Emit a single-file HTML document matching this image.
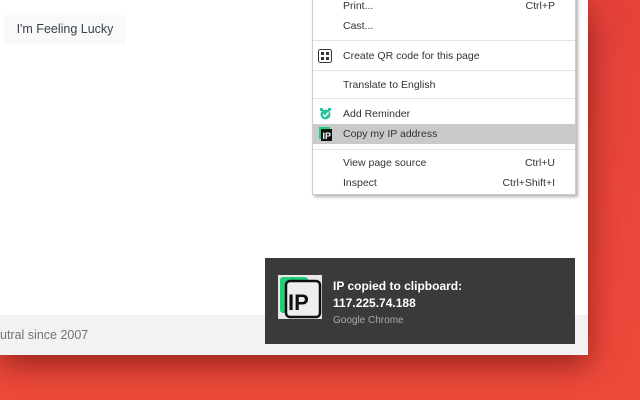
<!DOCTYPE html>
<html><head><style>
*{margin:0;padding:0;box-sizing:border-box}
body{width:640px;height:400px;overflow:hidden;background:linear-gradient(180deg,#e5423a,#ef4a3b);font-family:"Liberation Sans",Arial,sans-serif;position:relative}
.win{position:absolute;left:0;top:0;width:588px;height:355px;background:#fff;box-shadow:0 10px 30px rgba(90,10,10,.6)}
.btn{position:absolute;left:4px;top:15px;width:122px;height:29px;background:#f8f9fa;color:#3c4043;font-size:12.5px;line-height:29px;text-align:center}
.foot{position:absolute;left:0;top:315px;width:588px;height:40px;background:#f2f2f2;color:#70757a;font-size:12.5px;line-height:40px}
.menu{position:absolute;left:312px;top:-4px;width:264px;height:199px;background:#fff;border:1px solid #ccc;box-shadow:2px 2px 3px rgba(0,0,0,.3);font-size:10.5px;color:#333}
.it{position:absolute;left:0;width:100%;height:20px;line-height:20px;padding-left:30px}
.it .k{position:absolute;right:20px;top:0}
.sep{position:absolute;left:0;width:100%;height:1px;background:#e3e3e3}
.hl{background:#c9c9c9}
.toast{position:absolute;left:265px;top:258px;width:310px;height:86px;background:#3a3a3a;color:#fff}
</style></head><body>
<div class="win">
<div class="btn">I'm Feeling Lucky</div>
<div class="foot">utral since 2007</div>
</div>
<div class="menu">
<div class="it" style="top:-1px">Print...<span class="k">Ctrl+P</span></div>
<div class="it" style="top:19px">Cast...</div>
<div class="sep" style="top:43px"></div>
<div class="it" style="top:49px">Create QR code for this page
<svg style="position:absolute;left:5px;top:3px" width="14" height="14" viewBox="0 0 14 14"><rect x="0.5" y="0.5" width="13" height="13" rx="2" fill="none" stroke="#333"/><rect x="3" y="3" width="3" height="3" fill="#333"/><rect x="8" y="3" width="3" height="3" fill="#333"/><rect x="3" y="8" width="3" height="3" fill="#333"/><rect x="8" y="8" width="3" height="3" fill="#333"/></svg></div>
<div class="sep" style="top:73px"></div>
<div class="it" style="top:78px">Translate to English</div>
<div class="sep" style="top:101px"></div>
<div class="it" style="top:107px">Add Reminder
<svg style="position:absolute;left:7px;top:4px" width="11" height="12" viewBox="0 0 11 12"><circle cx="5.5" cy="6.5" r="5" fill="#2bc19b"/><rect x="0" y="0" width="3" height="3" fill="#2bc19b"/><rect x="8" y="0" width="3" height="3" fill="#2bc19b"/><path d="M3 6.5l2 2 3.5-4" stroke="#fff" stroke-width="1.5" fill="none"/></svg></div>
<div class="it hl" style="top:127px">Copy my IP address
<svg style="position:absolute;left:6px;top:3px" width="13" height="14" viewBox="0 0 13 14"><rect x="0" y="0" width="11" height="12" fill="#1fcf7a"/><rect x="2" y="2" width="11" height="12" fill="#111"/><text x="3.5" y="12" font-size="9" font-weight="bold" fill="#fff" font-family="Liberation Sans">IP</text></svg></div>
<div class="sep" style="top:152px"></div>
<div class="it" style="top:156px">View page source<span class="k">Ctrl+U</span></div>
<div class="it" style="top:176px">Inspect<span class="k">Ctrl+Shift+I</span></div>
</div>
<div class="toast">
<svg style="position:absolute;left:13px;top:17px" width="44" height="44" viewBox="0 0 44 44"><rect x="0" y="0" width="44" height="44" fill="#e8e8e8"/><rect x="2" y="2" width="28" height="36" rx="3" fill="#1fcf7a"/><rect x="8" y="6" width="34" height="36" rx="4" fill="#eee" stroke="#111" stroke-width="2.5"/><text x="10" y="35" font-size="22" font-weight="bold" fill="#111" font-family="Liberation Sans">IP</text></svg>
<div style="position:absolute;left:68px;top:20px;font-size:12px;font-weight:bold;line-height:17px">IP copied to clipboard:<br>117.225.74.188</div>
<div style="position:absolute;left:68px;top:57px;font-size:10px;color:#aaa">Google Chrome</div>
</div>
</body></html>
